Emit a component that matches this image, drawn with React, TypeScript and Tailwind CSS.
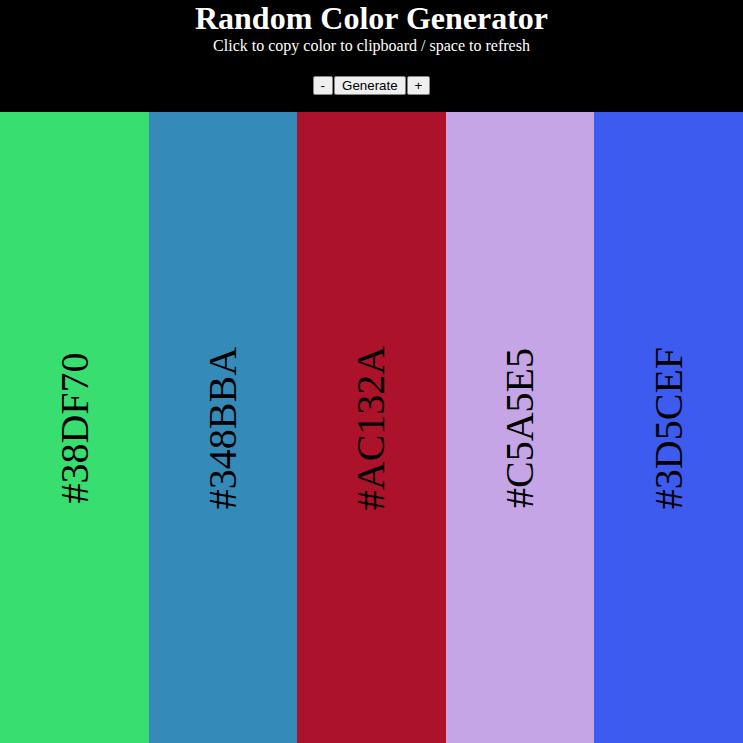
import React from "react";

const colors = ["#38DF70", "#348BBA", "#AC132A", "#C5A5E5", "#3D5CEF"];

export default function App() {
  return (
    <div className="w-[743px] h-[743px] flex flex-col bg-black overflow-hidden font-['Liberation_Serif',serif]">
      <div className="flex flex-col items-center text-white h-[112px] shrink-0">
        <h1 className="text-[32px] font-bold leading-[36.8px] mt-0">Random Color Generator</h1>
        <p className="text-[16px] leading-[18.4px]">Click to copy color to clipboard / space to refresh</p>
        <div className="flex gap-[1px] mt-[21px] font-['Liberation_Sans',sans-serif] text-[13.33px] text-black">
          <button className="bg-[#efefef] border border-[#858585] rounded-[2px] px-[7px] h-[19px] leading-[15px]">-</button>
          <button className="bg-[#efefef] border border-[#858585] rounded-[2px] px-[7px] h-[19px] leading-[15px]">Generate</button>
          <button className="bg-[#efefef] border border-[#858585] rounded-[2px] px-[7px] h-[19px] leading-[15px]">+</button>
        </div>
      </div>
      <div className="flex flex-1">
        {colors.map((c) => (
          <div key={c} className="flex-1 basis-0 min-w-0 flex items-center justify-center" style={{ backgroundColor: c }}>
            <span className="-rotate-90 text-[40px] text-black whitespace-nowrap leading-none">{c}</span>
          </div>
        ))}
      </div>
    </div>
  );
}
